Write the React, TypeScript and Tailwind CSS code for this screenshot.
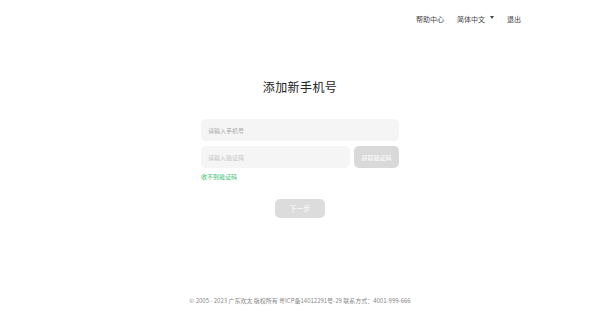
const font = { fontFamily: '"Noto Sans CJK SC", "Noto Sans", sans-serif' };

export default function App() {
  return (
    <div className="h-[316px] w-[600px] flex flex-col bg-white text-[#333]" style={font}>
      <header className="h-[38px] flex items-center justify-end pr-[79px] gap-[13px] text-[7px] text-[#444]">
        <span>帮助中心</span>
        <span className="flex items-center gap-[5px]">
          简体中文
          <span className="w-0 h-0 border-l-[2.5px] border-r-[2.5px] border-t-[3px] border-l-transparent border-r-transparent border-t-[#444] -mt-[3px]" />
        </span>
        <span>退出</span>
      </header>

      <main className="flex flex-col items-center">
        <h1 className="mt-[41px] text-[12px] leading-[16px] text-[#222] tracking-[0.4px]">添加新手机号</h1>

        <div className="mt-[24px] w-[198px] flex flex-col gap-[5px]">
          <input
            className="h-[22px] w-full rounded-[5px] bg-[#f5f5f5] px-[7px] text-[6px] outline-none placeholder:text-[#aaa]"
            placeholder="请输入手机号"
          />
          <div className="flex gap-[4px]">
            <input
              className="h-[22px] flex-1 min-w-0 rounded-[5px] bg-[#f5f5f5] px-[7px] text-[6px] outline-none placeholder:text-[#c4c4c4]"
              placeholder="请输入验证码"
            />
            <button className="h-[22px] w-[45px] rounded-[5px] bg-[#d9d9d9] text-[6px] text-white">获取验证码</button>
          </div>
          <span className="text-[6px] leading-[8px] text-[#3cbf6e]">收不到验证码</span>
        </div>

        <button className="mt-[18px] h-[19px] w-[50px] rounded-[5px] bg-[#dcdcdc] text-[7px] text-white">下一步</button>
      </main>

      <div className="flex-1" />
      <footer className="pb-[10px] text-center text-[6px] leading-[10px] text-[#888]">
        © 2005 - 2023 广东欢太 版权所有 粤ICP备14012291号-29 联系方式：4001-999-666
      </footer>
    </div>
  );
}
